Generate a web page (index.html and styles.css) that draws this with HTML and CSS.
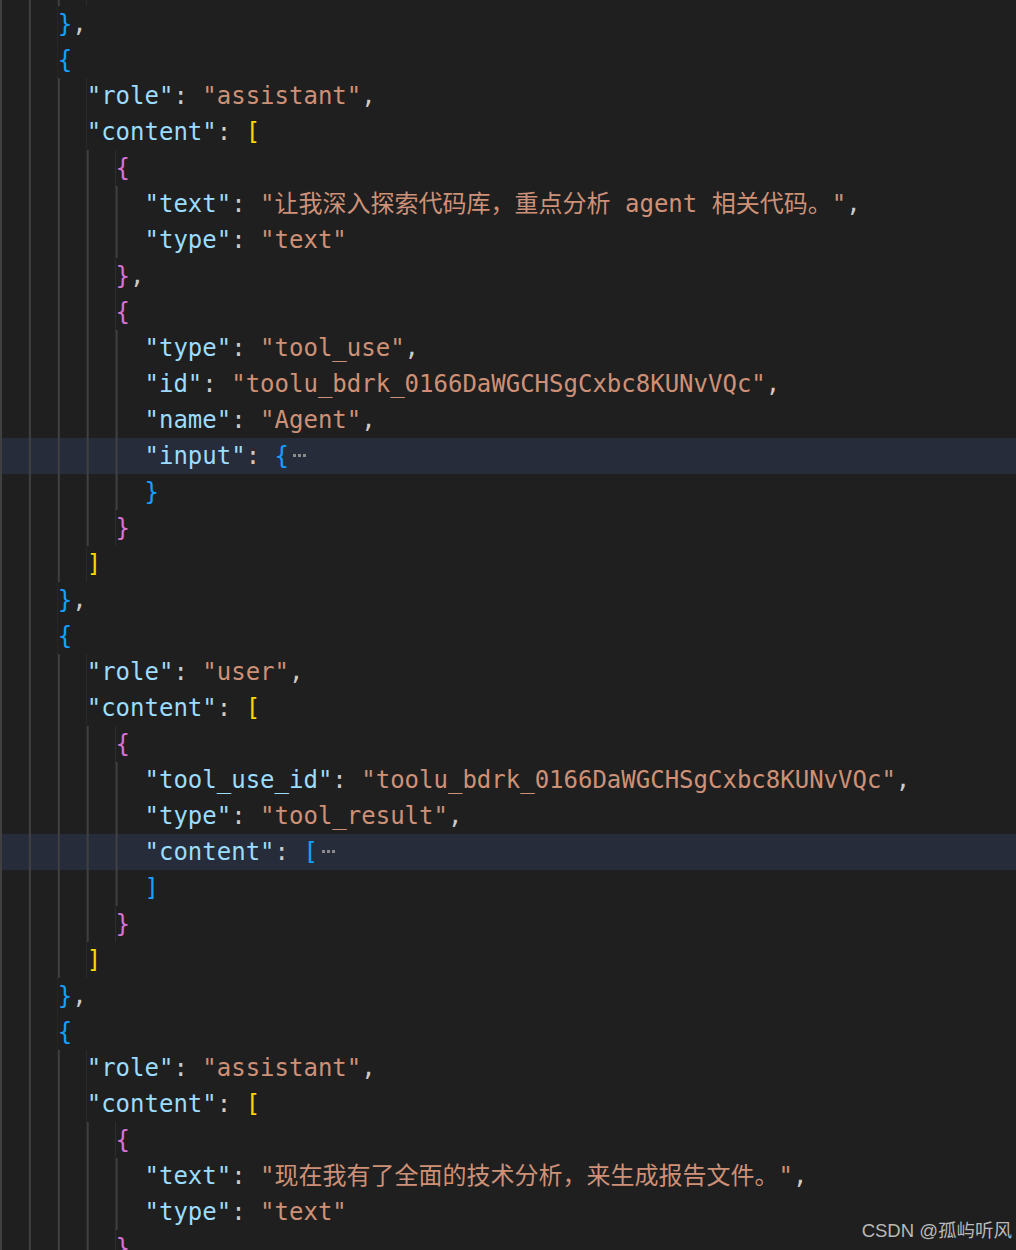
FILE: index.html
```html
<!DOCTYPE html>
<html lang="zh-CN">
<head>
<meta charset="utf-8">
<title>messages.json</title>
<link rel="stylesheet" href="styles.css">
</head>
<body>
<div class="editor">
<div class="line top"><span class="ind i3"></span></div>
<div class="line"><span class="ind i2"></span><span class="b3">}</span><span class="p">,</span></div>
<div class="line"><span class="ind i2"></span><span class="b3">{</span></div>
<div class="line"><span class="ind i3"></span><span class="k">"role"</span><span class="p">: </span><span class="s">"assistant"</span><span class="p">,</span></div>
<div class="line"><span class="ind i3"></span><span class="k">"content"</span><span class="p">: </span><span class="b1">[</span></div>
<div class="line"><span class="ind i4"></span><span class="b2">{</span></div>
<div class="line"><span class="ind i5"></span><span class="k">"text"</span><span class="p">: </span><span class="s">"让我深入探索代码库，重点分析 agent 相关代码。"</span><span class="p">,</span></div>
<div class="line"><span class="ind i5"></span><span class="k">"type"</span><span class="p">: </span><span class="s">"text"</span></div>
<div class="line"><span class="ind i4"></span><span class="b2">}</span><span class="p">,</span></div>
<div class="line"><span class="ind i4"></span><span class="b2">{</span></div>
<div class="line"><span class="ind i5"></span><span class="k">"type"</span><span class="p">: </span><span class="s">"tool_use"</span><span class="p">,</span></div>
<div class="line"><span class="ind i5"></span><span class="k">"id"</span><span class="p">: </span><span class="s">"toolu_bdrk_0166DaWGCHSgCxbc8KUNvVQc"</span><span class="p">,</span></div>
<div class="line"><span class="ind i5"></span><span class="k">"name"</span><span class="p">: </span><span class="s">"Agent"</span><span class="p">,</span></div>
<div class="line hl"><span class="ind i5"></span><span class="k">"input"</span><span class="p">: </span><span class="b3">{</span><span class="fold"></span></div>
<div class="line"><span class="ind i5"></span><span class="b3">}</span></div>
<div class="line"><span class="ind i4"></span><span class="b2">}</span></div>
<div class="line"><span class="ind i3"></span><span class="b1">]</span></div>
<div class="line"><span class="ind i2"></span><span class="b3">}</span><span class="p">,</span></div>
<div class="line"><span class="ind i2"></span><span class="b3">{</span></div>
<div class="line"><span class="ind i3"></span><span class="k">"role"</span><span class="p">: </span><span class="s">"user"</span><span class="p">,</span></div>
<div class="line"><span class="ind i3"></span><span class="k">"content"</span><span class="p">: </span><span class="b1">[</span></div>
<div class="line"><span class="ind i4"></span><span class="b2">{</span></div>
<div class="line"><span class="ind i5"></span><span class="k">"tool_use_id"</span><span class="p">: </span><span class="s">"toolu_bdrk_0166DaWGCHSgCxbc8KUNvVQc"</span><span class="p">,</span></div>
<div class="line"><span class="ind i5"></span><span class="k">"type"</span><span class="p">: </span><span class="s">"tool_result"</span><span class="p">,</span></div>
<div class="line hl"><span class="ind i5"></span><span class="k">"content"</span><span class="p">: </span><span class="b3">[</span><span class="fold"></span></div>
<div class="line"><span class="ind i5"></span><span class="b3">]</span></div>
<div class="line"><span class="ind i4"></span><span class="b2">}</span></div>
<div class="line"><span class="ind i3"></span><span class="b1">]</span></div>
<div class="line"><span class="ind i2"></span><span class="b3">}</span><span class="p">,</span></div>
<div class="line"><span class="ind i2"></span><span class="b3">{</span></div>
<div class="line"><span class="ind i3"></span><span class="k">"role"</span><span class="p">: </span><span class="s">"assistant"</span><span class="p">,</span></div>
<div class="line"><span class="ind i3"></span><span class="k">"content"</span><span class="p">: </span><span class="b1">[</span></div>
<div class="line"><span class="ind i4"></span><span class="b2">{</span></div>
<div class="line"><span class="ind i5"></span><span class="k">"text"</span><span class="p">: </span><span class="s">"现在我有了全面的技术分析，来生成报告文件。"</span><span class="p">,</span></div>
<div class="line"><span class="ind i5"></span><span class="k">"type"</span><span class="p">: </span><span class="s">"text"</span></div>
<div class="line"><span class="ind i4"></span><span class="b2">}</span></div>
</div>
<div class="watermark">CSDN @孤屿听风</div>
</body>
</html>
```

FILE: styles.css
```css
html, body {
  margin: 0;
  padding: 0;
  background: #1f1f1f;
}

body {
  overflow: hidden;
}

.editor {
  background: #1f1f1f;
  font-family: "DejaVu Sans Mono", "Noto Sans CJK SC", monospace;
  font-size: 24px;
  color: #cccccc;
}

.line {
  height: 36px;
  line-height: 36px;
  white-space: pre;
}

.line.top {
  height: 6px;
  line-height: 6px;
}

.line.hl {
  background: #262c39;
}

.ind {
  display: inline-block;
  vertical-align: top;
  height: 36px;
  background: linear-gradient(90deg, #404040 2px, transparent 2px) 0 0 / 2ch 100% repeat-x;
}

.top .ind {
  height: 6px;
}

.i2 { width: 4ch; }
.i3 { width: 6ch; }
.i4 { width: 8ch; }
.i5 { width: 10ch; }

.k { color: #9cdcfe; }
.s { color: #ce9178; }
.p { color: #cccccc; }
.b1 { color: #ffd700; }
.b2 { color: #da70d6; }
.b3 { color: #179fff; }

.fold {
  display: inline-block;
  width: 13px;
  height: 3px;
  margin-left: 4px;
  vertical-align: 7px;
  background: linear-gradient(90deg, #8a8a8a 3px, transparent 3px) 0 0 / 5px 3px repeat-x;
}

.watermark {
  position: absolute;
  right: 4px;
  bottom: 8px;
  font-family: "Liberation Sans", "Noto Sans CJK SC", sans-serif;
  font-size: 18.5px;
  line-height: 22px;
  color: #b9b9b9;
  white-space: nowrap;
}
```
